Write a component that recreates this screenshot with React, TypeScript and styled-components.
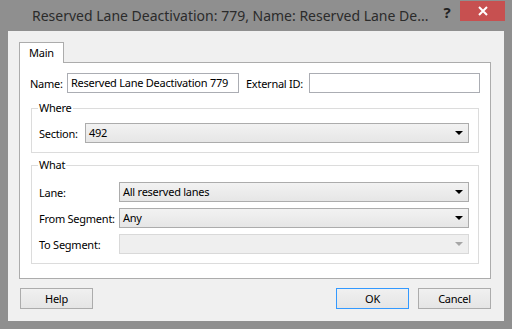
import React from 'react';
import styled, { createGlobalStyle } from 'styled-components';

const GlobalStyle = createGlobalStyle`
  html, body {
    margin: 0;
    padding: 0;
    background: #8f8f8f;
  }
  body {
    font-family: "Segoe UI", "Noto Sans", sans-serif;
    font-size: 11px;
    letter-spacing: -0.25px;
    color: #000;
  }
`;

const Window = styled.div`
  width: 512px;
  height: 329px;
  background: #8f8f8f;
  display: flex;
  flex-direction: column;
  overflow: hidden;
`;

const TitleBar = styled.div`
  height: 31px;
  display: flex;
  align-items: flex-start;
  flex-shrink: 0;
`;

const TitleText = styled.div`
  flex: 1;
  padding-left: 32px;
  line-height: 31px;
  font-size: 14px;
  letter-spacing: 0;
  color: #2b2b2b;
  white-space: nowrap;
  overflow: hidden;
`;

const HelpGlyph = styled.div`
  width: 26px;
  height: 26px;
  line-height: 24px;
  text-align: center;
  font-size: 15px;
  font-weight: bold;
  color: #222;
`;

const CloseButton = styled.div`
  width: 45px;
  height: 20px;
  margin: 1px 7px 0 0;
  background: #c75050;
  display: flex;
  align-items: center;
  justify-content: center;
`;

const Client = styled.div`
  flex: 1;
  margin: 0 8px 8px 8px;
  background: #f0f0f0;
  padding: 11px 13px 0 11px;
  display: flex;
  flex-direction: column;
`;

const TabStrip = styled.div`
  display: flex;
  height: 20px;
`;

const Tab = styled.div`
  position: relative;
  z-index: 1;
  width: 45px;
  height: 21px;
  box-sizing: border-box;
  border: 1px solid #acacac;
  border-bottom: none;
  background: #fff;
  text-align: center;
  line-height: 19px;
`;

const Panel = styled.div`
  height: 217px;
  box-sizing: border-box;
  border: 1px solid #acacac;
  background: #fff;
  padding: 10px 10px 0 10px;
  display: flex;
  flex-direction: column;
`;

const Row = styled.div`
  display: flex;
  align-items: center;
  height: 20px;
`;

const Label = styled.span<{ $w: number; $ml?: number }>`
  width: ${(p) => p.$w}px;
  margin-left: ${(p) => p.$ml ?? 0}px;
  flex-shrink: 0;
  white-space: nowrap;
`;

const TextInput = styled.div<{ $w: number }>`
  width: ${(p) => p.$w}px;
  height: 20px;
  box-sizing: border-box;
  border: 1px solid #abadb3;
  background: #fff;
  padding-left: 3px;
  line-height: 18px;
  white-space: nowrap;
  overflow: hidden;
`;

const Group = styled.fieldset<{ $mt: number; $pt: number }>`
  margin: ${(p) => p.$mt}px 1px 0 1px;
  padding: ${(p) => p.$pt}px 9px 9px 7px;
  border: 1px solid #dcdcdc;
  display: flex;
  flex-direction: column;
  gap: 6px;
  min-width: 0;
`;

const Legend = styled.legend`
  padding: 0 1px;
  margin-left: -1px;
  line-height: 16px;
  color: #000;
`;

const Select = styled.div<{ $disabled?: boolean }>`
  flex: 1;
  height: 20px;
  box-sizing: border-box;
  border: 1px solid ${(p) => (p.$disabled ? '#d9d9d9' : '#acacac')};
  background: ${(p) =>
    p.$disabled ? '#efefef' : 'linear-gradient(#f2f2f2, #e6e6e6)'};
  padding-left: 3px;
  line-height: 18px;
  display: flex;
  align-items: center;
  justify-content: space-between;
  padding-right: 5px;
`;

const Arrow = styled.span<{ $disabled?: boolean }>`
  width: 0;
  height: 0;
  border-left: 4px solid transparent;
  border-right: 4px solid transparent;
  border-top: 4px solid ${(p) => (p.$disabled ? '#a6a6a6' : '#000')};
`;

const ButtonBar = styled.div`
  display: flex;
  align-items: center;
  margin-top: 9px;
  padding-left: 1px;
  gap: 9px;
`;

const Button = styled.div<{ $default?: boolean }>`
  width: 73px;
  height: 21px;
  box-sizing: border-box;
  border: 1px solid ${(p) => (p.$default ? '#3399ff' : '#acacac')};
  background: linear-gradient(#f0f0f0, #e5e5e5);
  text-align: center;
  line-height: 19px;
`;

const Spacer = styled.div`
  flex: 1;
`;

function Combo({ value, disabled }: { value?: string; disabled?: boolean }) {
  return (
    <Select $disabled={disabled}>
      <span>{value}</span>
      <Arrow $disabled={disabled} />
    </Select>
  );
}

export default function App() {
  return (
    <>
      <GlobalStyle />
      <Window>
        <TitleBar>
          <TitleText>Reserved Lane Deactivation: 779, Name: Reserved Lane De...</TitleText>
          <HelpGlyph>?</HelpGlyph>
          <CloseButton>
            <svg width="10" height="10" viewBox="0 0 10 10">
              <path d="M1 1L9 9M9 1L1 9" stroke="#fff" strokeWidth="2" />
            </svg>
          </CloseButton>
        </TitleBar>
        <Client>
          <TabStrip>
            <Tab>Main</Tab>
          </TabStrip>
          <Panel>
            <Row>
              <Label $w={37}>Name:</Label>
              <TextInput $w={172}>Reserved Lane Deactivation 779</TextInput>
              <Label $w={63} $ml={7}>External ID:</Label>
              <TextInput $w={171} />
            </Row>
            <Group $mt={7} $pt={7}>
              <Legend>Where</Legend>
              <Row>
                <Label $w={46}>Section:</Label>
                <Combo value="492" />
              </Row>
            </Group>
            <Group $mt={4} $pt={9}>
              <Legend>What</Legend>
              <Row>
                <Label $w={80}>Lane:</Label>
                <Combo value="All reserved lanes" />
              </Row>
              <Row>
                <Label $w={80}>From Segment:</Label>
                <Combo value="Any" />
              </Row>
              <Row>
                <Label $w={80}>To Segment:</Label>
                <Combo disabled />
              </Row>
            </Group>
          </Panel>
          <ButtonBar>
            <Button>Help</Button>
            <Spacer />
            <Button $default>OK</Button>
            <Button>Cancel</Button>
          </ButtonBar>
        </Client>
      </Window>
    </>
  );
}
